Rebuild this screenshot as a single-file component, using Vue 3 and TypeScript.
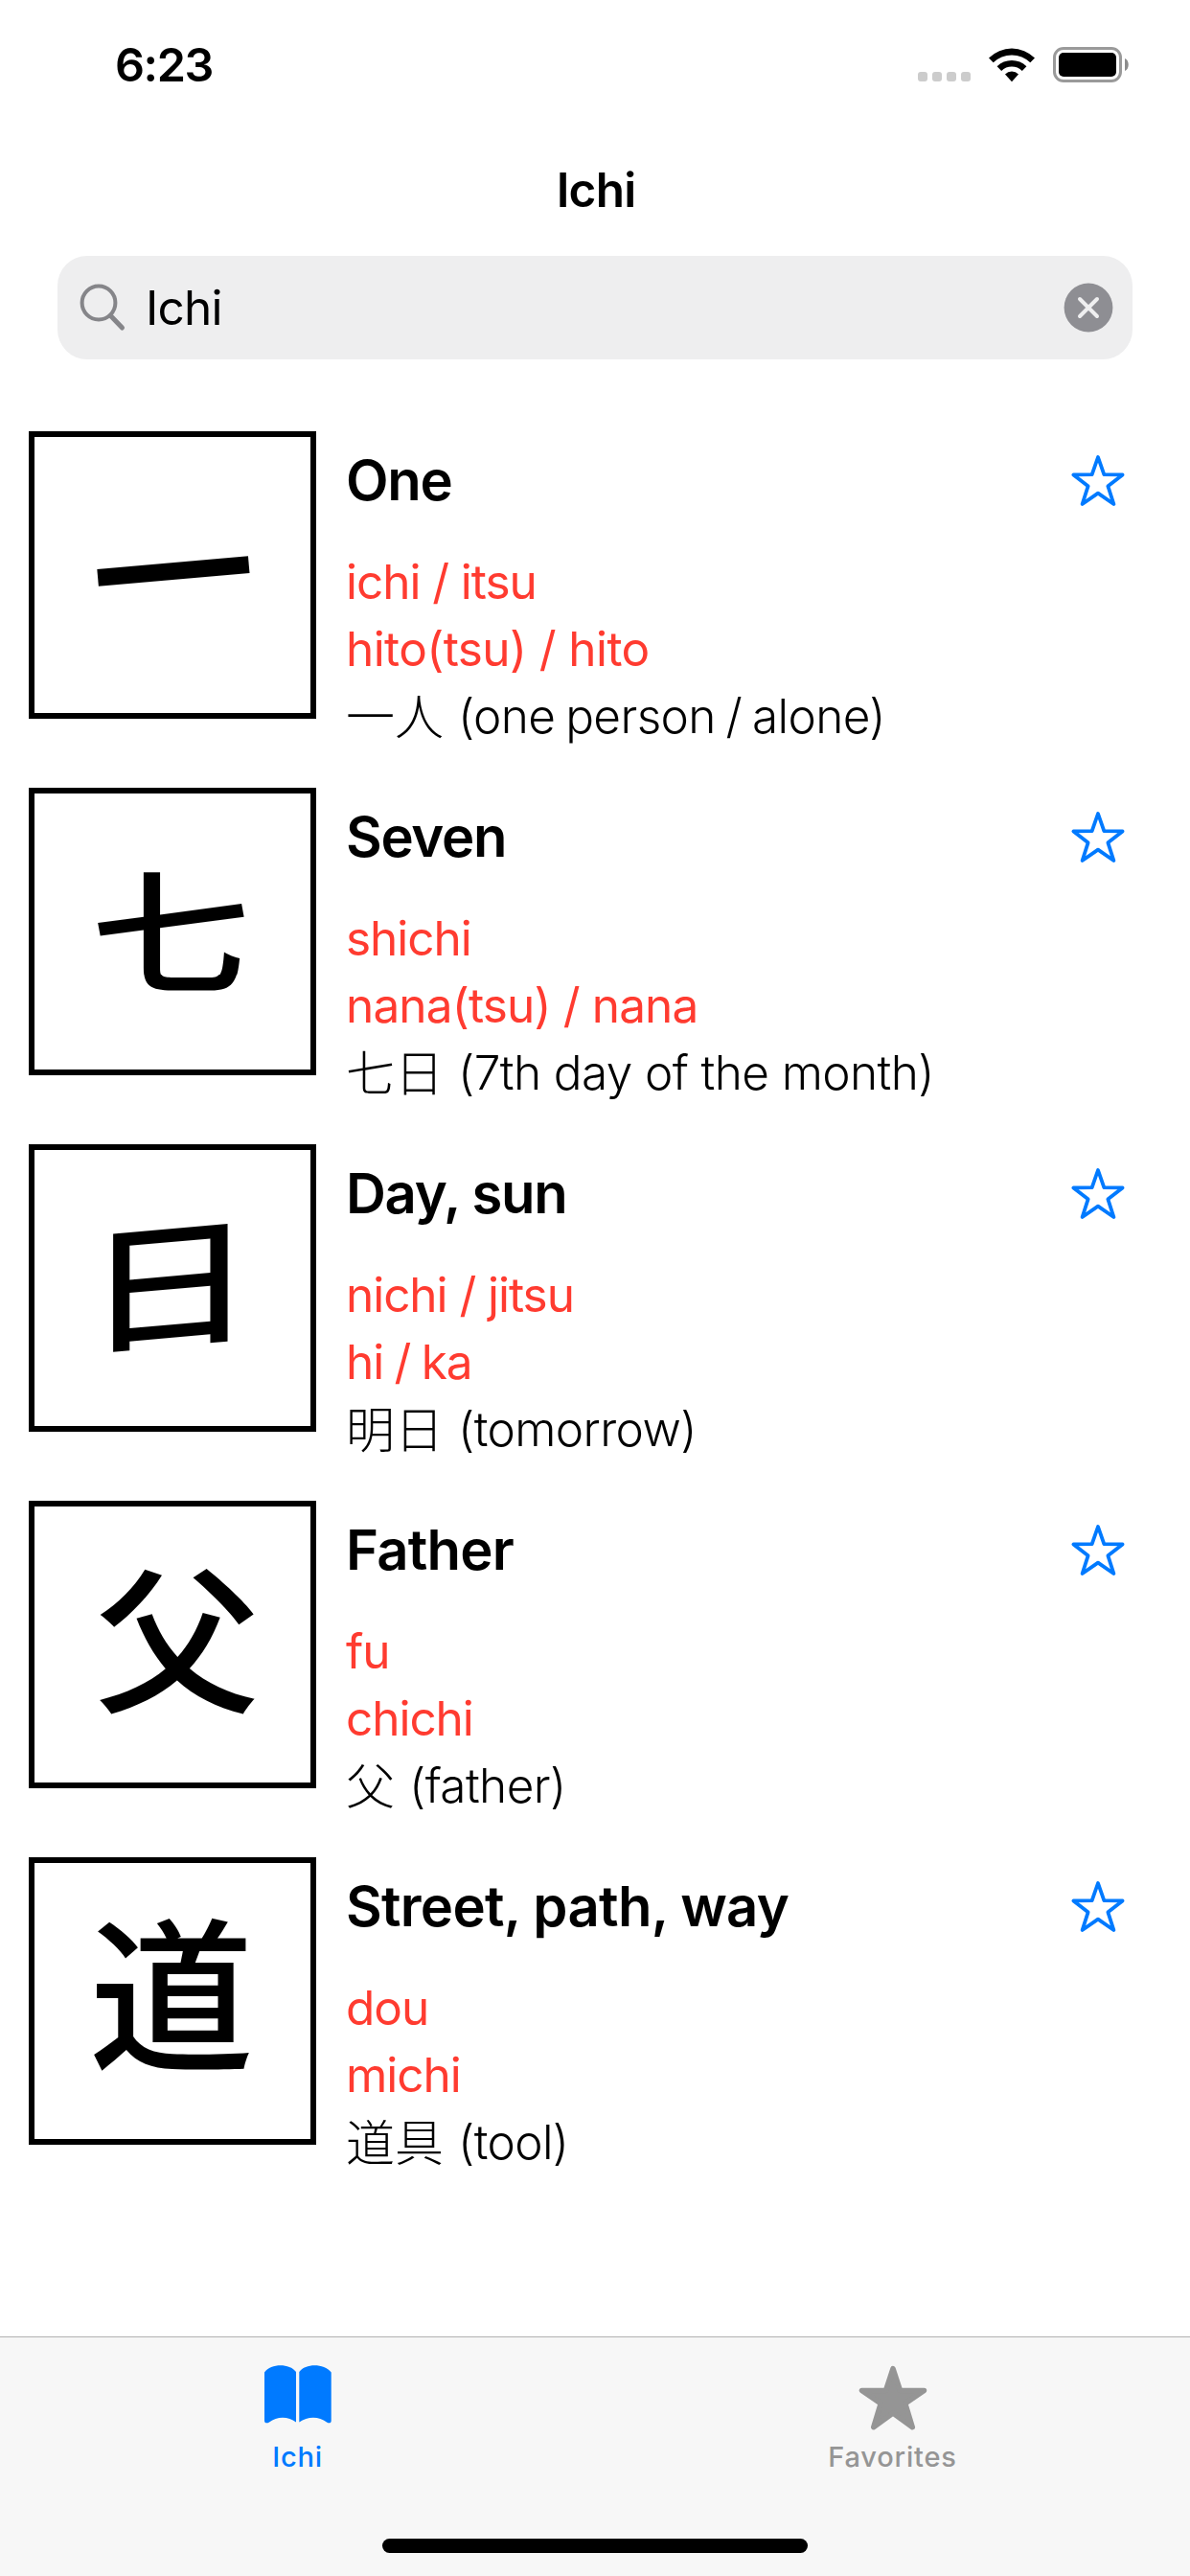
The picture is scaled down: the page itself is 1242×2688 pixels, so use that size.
<script setup lang="ts">
interface Entry {
  kanji: string
  kind: string
  meaning: string
  on: string
  kun: string
  word: string
  gloss: string
}

const query = 'Ichi'

const entries: Entry[] = [
  { kanji: '一', kind: 'one', meaning: 'One', on: 'ichi / itsu', kun: 'hito(tsu) / hito', word: '一人', gloss: '(one person / alone)' },
  { kanji: '七', kind: 'seven', meaning: 'Seven', on: 'shichi', kun: 'nana(tsu) / nana', word: '七日', gloss: '(7th day of the month)' },
  { kanji: '日', kind: 'day', meaning: 'Day, sun', on: 'nichi / jitsu', kun: 'hi / ka', word: '明日', gloss: '(tomorrow)' },
  { kanji: '父', kind: 'father', meaning: 'Father', on: 'fu', kun: 'chichi', word: '父', gloss: '(father)' },
  { kanji: '道', kind: 'street', meaning: 'Street, path, way', on: 'dou', kun: 'michi', word: '道具', gloss: '(tool)' },
]
</script>

<template>
  <div class="screen">
    <header class="status">
      <span class="time">6:23</span>
      <div class="indicators">
        <div class="dots"><i v-for="n in 4" :key="n"></i></div>
        <svg class="wifi" width="48" height="37" viewBox="0 0 48 37">
          <path d="M0 11.5A34 34 0 0 1 48 11.5L43.3 16.3A27.5 27.5 0 0 0 4.7 16.3Z" />
          <path d="M8.6 20.2A22 22 0 0 1 39.4 20.2L34.8 24.9A15.4 15.4 0 0 0 13.2 24.9Z" />
          <path d="M17 28.4A10 10 0 0 1 31 28.4L24 36.3Z" />
        </svg>
        <svg class="battery" width="80" height="37" viewBox="0 0 80 37">
          <rect x="1.5" y="1.5" width="69" height="34" rx="9.5" fill="none" stroke="#9a9a9a" stroke-width="3" />
          <rect x="6" y="6" width="60" height="25" rx="5" />
          <path d="M75 12C80 14 80 23 75 25Z" fill="#8c8c8c" />
        </svg>
      </div>
    </header>

    <h1 class="heading">Ichi</h1>

    <div class="search">
      <svg width="50" height="50" viewBox="0 0 50 50" fill="none" stroke="#858589" stroke-linecap="round">
        <circle cx="21" cy="20" r="17.4" stroke-width="4" />
        <path d="M33.500 33.500L45.500 46" stroke-width="5" />
      </svg>
      <span class="query">{{ query }}</span>
      <svg class="clear" width="52" height="52" viewBox="0 0 52 52">
        <circle cx="26" cy="26" r="25.4" fill="#8e8e93" />
        <path d="M17 17L35 35M35 17L17 35" stroke="#efeff0" stroke-width="4" stroke-linecap="round" />
      </svg>
    </div>

    <main class="list">
      <article v-for="e in entries" :key="e.kanji" class="entry" :class="e.kind">
        <div class="card"><span class="glyph">{{ e.kanji }}</span></div>
        <div class="text">
          <h2>{{ e.meaning }}</h2>
          <p class="reading">{{ e.on }}</p>
          <p class="reading kun">{{ e.kun }}</p>
          <p class="example"><span class="word">{{ e.word }}</span><span>{{ e.gloss }}</span></p>
        </div>
        <svg class="star" width="60" height="58" viewBox="0 0 60 58">
          <path d="M30 4L36.3 22.2L55.6 22.4L40.4 34.3L46.4 53L30 41.6L13.6 53L19.6 34.3L4.4 22.4L23.7 22.2Z" fill="none" stroke="#007aff" stroke-width="3.8" stroke-linejoin="round" />
        </svg>
      </article>
    </main>

    <footer class="tabs">
      <div class="tabrow">
        <div class="tab active">
          <svg width="72" height="70" viewBox="0 0 72 70" fill="currentColor">
            <path d="M1 8.500C8 -1 27 -1 34 8V60.500C26 54 14 54 6 60.500C3.500 62 1 61.500 1 59Z" />
            <path d="M37.300 8C44 -1 63 -1 70.700 8.500V59C70.700 61.500 68.500 62 66 60.500C58 54 46 54 37.300 60.500Z" />
          </svg>
          <span>Ichi</span>
        </div>
        <div class="tab">
          <svg width="72" height="70" viewBox="0 0 72 70" fill="currentColor" stroke="currentColor">
            <path d="M36 4.500L43.500 27.400H68.500L48.800 41L56.300 65.700L36 51L15.700 65.700L23.200 41L3.500 27.400H28.500Z" stroke-width="5.500" stroke-linejoin="round" />
          </svg>
          <span>Favorites</span>
        </div>
      </div>
      <div class="home"></div>
    </footer>
  </div>
</template>

<style>
body {
  margin: 0;
  background: #fff;
}
</style>

<style scoped>
.screen {
  width: 1242px;
  height: 2688px;
  display: flex;
  flex-direction: column;
  background: #fff;
  color: #000;
  font-family: Inter, "Noto Sans CJK JP", sans-serif;
  overflow: hidden;
}
h1, h2, p {
  margin: 0;
}
.status {
  height: 132px;
  box-sizing: border-box;
  padding: 32px 63px 0 120px;
  display: flex;
  justify-content: space-between;
}
.time {
  padding-top: 1px;
  font-size: 48.5px;
  line-height: 70px;
  font-weight: 600;
  letter-spacing: -1.4px;
}
.indicators {
  display: flex;
  align-items: flex-start;
  padding-top: 17px;
}
.dots {
  display: flex;
  gap: 5px;
  padding-top: 26px;
  margin-right: 19px;
}
.dots i {
  width: 10px;
  height: 10px;
  border-radius: 3px;
  background: #ccc;
}
.wifi {
  margin-right: 19px;
}
.heading {
  height: 135px;
  box-sizing: border-box;
  padding: 31px 0 0 2px;
  text-align: center;
  font-size: 49.5px;
  line-height: 70px;
  font-weight: 600;
  letter-spacing: -0.8px;
}
.search {
  height: 108px;
  box-sizing: border-box;
  margin: 0 60px;
  padding: 0 20px 0 22px;
  border-radius: 31px;
  background: #eeeeef;
  display: flex;
  align-items: center;
}
.query {
  flex: 1;
  padding-left: 20px;
  font-size: 49.5px;
  line-height: 70px;
  letter-spacing: -0.8px;
}
.list {
  flex: 1;
  padding: 75px 66px 0 30px;
}
.entry {
  height: 372px;
  display: flex;
  align-items: flex-start;
}
.card {
  width: 300px;
  height: 300px;
  box-sizing: border-box;
  border: 6px solid #000;
  display: flex;
  align-items: center;
  justify-content: center;
}
.glyph {
  display: block;
  font-family: "Noto Sans CJK JP", sans-serif;
  font-size: 172px;
  line-height: 172px;
  font-weight: 500;
}
.one .glyph {
  transform: translateY(-12px) rotate(-5deg);
}
.seven .glyph {
  transform: translate(-2px, -7px) scale(0.97, 0.82);
}
.day .glyph {
  transform: translate(-3px, -12px) skewY(-5deg) scale(1.03, 0.84);
}
.father .glyph {
  transform: translate(5px, -14px) scaleY(0.96);
}
.street .glyph {
  transform: translate(-1px, -16px);
}
.text {
  flex: 1;
  padding: 15px 0 0 31px;
  white-space: nowrap;
}
h2 {
  height: 72px;
  margin-bottom: 35px;
  font-size: 58px;
  line-height: 72px;
  font-weight: 600;
  letter-spacing: -1.3px;
}
.father h2 {
  letter-spacing: -0.8px;
}
.street h2 {
  letter-spacing: -0.7px;
}
p {
  height: 70px;
  font-size: 49.5px;
  line-height: 70px;
  letter-spacing: -0.6px;
}
.reading {
  color: #ff3b30;
  letter-spacing: -1.05px;
}
.one .kun {
  letter-spacing: -0.6px;
}
.seven .kun {
  letter-spacing: -0.85px;
}
.day .kun {
  word-spacing: -1.5px;
}
.example {
  display: flex;
  font-weight: 300;
}
.one .example {
  word-spacing: -2.6px;
}
.word {
  margin: -2px 15px 0 0;
  font-family: "Noto Sans CJK JP", sans-serif;
  font-size: 51px;
  letter-spacing: 0;
}
.star {
  margin-top: 23px;
}
.tabs {
  height: 250px;
  box-sizing: border-box;
  border-top: 1px solid #b2b2b2;
  background: #f7f7f7;
  display: flex;
  flex-direction: column;
  align-items: center;
}
.tabrow {
  width: 100%;
  height: 210px;
  display: flex;
}
.tab {
  flex: 1;
  padding-top: 28px;
  display: flex;
  flex-direction: column;
  align-items: center;
  color: #959595;
  font-size: 29px;
  line-height: 36px;
  font-weight: 500;
  letter-spacing: 0.8px;
}
.tab span {
  margin-top: 9px;
}
.active {
  color: #007aff;
}
.home {
  width: 444px;
  height: 15px;
  border-radius: 8px;
  background: #000;
}
</style>
